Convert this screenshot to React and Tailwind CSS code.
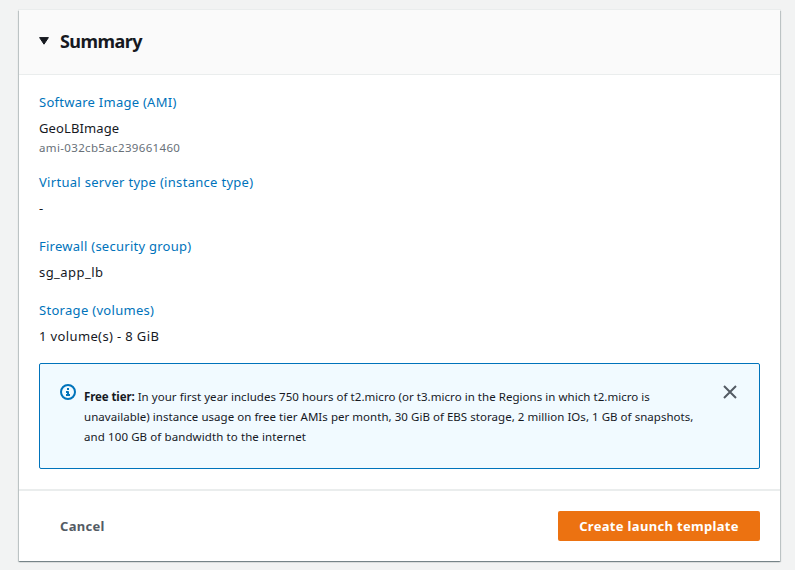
function Field({ label, labelSpacing, children }) {
  return (
    <div className="flex flex-col items-start gap-1.5">
      <a className={`text-[#0073bb] ${labelSpacing}`}>{label}</a>
      <div className="text-[#16191f]">{children}</div>
    </div>
  );
}

export default function App() {
  return (
    <div className="h-[570px] w-[795px] overflow-hidden bg-[#f2f3f3] pt-2.5 pr-[15px] pl-[19px] font-['Noto_Sans','Open_Sans',sans-serif] text-[13px] leading-5 whitespace-nowrap text-[#16191f]">
      <div className="flex h-[551px] flex-col bg-white shadow-[0_1px_1px_0_rgba(0,28,36,0.3),1px_1px_1px_0_rgba(0,28,36,0.15),-1px_1px_1px_0_rgba(0,28,36,0.15),0_0_0_1px_#eaeded]">
        <header className="flex h-[65px] shrink-0 items-center gap-2.5 border-b border-[#eaeded] bg-[#fafafa] pb-[2px] pl-5">
          <svg className="h-2 w-[11px] shrink-0" viewBox="0 0 11 8">
            <path d="M.6.6h8.8L5 7.2z" fill="#16191f" stroke="#16191f" strokeWidth="1" strokeLinejoin="round" />
          </svg>
          <h2 className="text-[18px] leading-[22px] font-bold tracking-[-0.55px]">Summary</h2>
        </header>

        <section className="flex h-[414px] shrink-0 flex-col px-5 pt-[17px]">
          <div className="flex flex-col gap-[18px]">
            <div className="-mb-1">
              <Field label="Software Image (AMI)" labelSpacing="tracking-[0.26px]">
                <div className="tracking-[0.12px]">GeoLBImage</div>
                <div className="text-[11.5px] tracking-[0.35px] text-[#687078]">ami-032cb5ac239661460</div>
              </Field>
            </div>
            <Field label="Virtual server type (instance type)" labelSpacing="tracking-[0.3px]">-</Field>
            <Field label="Firewall (security group)" labelSpacing="tracking-[0.26px]">
              <span className="tracking-[0.45px]">sg_app_lb</span>
            </Field>
            <Field label="Storage (volumes)" labelSpacing="tracking-[0.3px]">
              <span className="tracking-[0.37px]">1 volume(s) - 8 GiB</span>
            </Field>
          </div>

          <div className="mt-[17px] flex h-[106px] items-start rounded-[2px] border border-[#0073bb] bg-[#f1faff] pl-5">
            <svg className="mt-5 h-4 w-4 shrink-0" viewBox="0 0 16 16" fill="none" stroke="#0073bb" strokeWidth="2">
              <circle cx="8" cy="8" r="7" />
              <path d="M8 11V8H6M10 11H6" strokeLinejoin="round" />
              <path d="M7 5h2" />
            </svg>
            <div className="mt-[23px] ml-2 text-[11.5px]">
              <div className="tracking-[0.04px]"><b className="tracking-[-0.1px]">Free tier:</b> In your first year includes 750 hours of t2.micro (or t3.micro in the Regions in which t2.micro is</div>
              <div className="tracking-[0.036px]">unavailable) instance usage on free tier AMIs per month, 30 GiB of EBS storage, 2 million IOs, 1 GB of snapshots,</div>
              <div className="tracking-[0.1px]">and 100 GB of bandwidth to the internet</div>
            </div>
            <svg className="mt-5 mr-[21px] ml-auto h-4 w-4 shrink-0" viewBox="0 0 16 16" fill="none" stroke="#545b64" strokeWidth="2">
              <path d="M2 2l12 12M14 2L2 14" />
            </svg>
          </div>
        </section>

        <footer className="flex flex-1 items-center justify-between border-t-2 border-[#eaeded] pr-5 pl-[41px] font-bold">
          <button className="tracking-[0.3px] text-[#545b64]">Cancel</button>
          <button className="h-[30px] w-[202px] rounded-[2px] bg-[#ec7211] tracking-[0.32px] text-white">Create launch template</button>
        </footer>
      </div>
    </div>
  );
}
